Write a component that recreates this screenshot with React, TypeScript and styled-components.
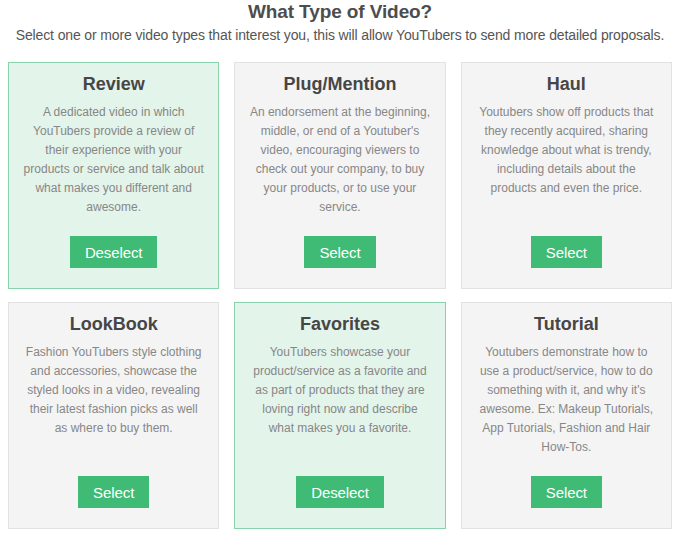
import {useState} from "react";
import styled, {createGlobalStyle} from "styled-components";

const GlobalStyle = createGlobalStyle`
body {
    margin: 0;
    background: #ffffff;
    font-family: "Liberation Sans", Arial, sans-serif;
}
`

const Page = styled.div`
padding: 0 8px;
`

const Header = styled.div`
text-align: center;
margin-bottom: 18px;
`

const Heading = styled.h1`
margin: 0;
font-size: 19px;
line-height: 24px;
font-weight: 700;
color: #4d4d4d;
letter-spacing: -0.1px;
`

const Subtitle = styled.p`
margin: 2px 0 0;
font-size: 14px;
line-height: 18px;
color: #555555;
letter-spacing: -0.13px;
`

const Grid = styled.div`
display: grid;
grid-template-columns: repeat(3, 1fr);
column-gap: 15px;
row-gap: 13px;
`

const Card = styled.div<{ $selected: boolean }>`
display: flex;
flex-direction: column;
align-items: center;
padding: 10px 0 20px;
border: 1px solid ${p => p.$selected ? '#8ad2ac' : '#e2e2e2'};
background-color: ${p => p.$selected ? '#e3f4ea' : '#f4f4f4'};
text-align: center;
`

const Title = styled.h2`
margin: 0;
font-size: 18px;
line-height: 22px;
font-weight: 700;
color: #464646;
`

const Description = styled.p`
margin: 8px 0 19px;
padding: 0 13px;
font-size: 12px;
line-height: 19px;
color: #878787;
`

const Button = styled.button`
margin-top: auto;
height: 32px;
padding: 0 15px;
border: none;
background-color: #3fbb76;
color: #ffffff;
font-family: "Liberation Sans", Arial, sans-serif;
font-size: 15px;
letter-spacing: -0.1px;
cursor: pointer;
&:hover{
background-color: #37a968;
}
`

const types = [
    {
        title: 'Review',
        text: 'A dedicated video in which YouTubers provide a review of their experience with your products or service and talk about what makes you different and awesome.',
    },
    {
        title: 'Plug/Mention',
        text: "An endorsement at the beginning, middle, or end of a Youtuber's video, encouraging viewers to check out your company, to buy your products, or to use your service.",
    },
    {
        title: 'Haul',
        text: 'Youtubers show off products that they recently acquired, sharing knowledge about what is trendy, including details about the products and even the price.',
    },
    {
        title: 'LookBook',
        text: 'Fashion YouTubers style clothing and accessories, showcase the styled looks in a video, revealing their latest fashion picks as well as where to buy them.',
    },
    {
        title: 'Favorites',
        text: 'YouTubers showcase your product/service as a favorite and as part of products that they are loving right now and describe what makes you a favorite.',
    },
    {
        title: 'Tutorial',
        text: "Youtubers demonstrate how to use a product/service, how to do something with it, and why it's awesome. Ex: Makeup Tutorials, App Tutorials, Fashion and Hair How-Tos.",
    },
]

const App = () => {

    const [selected, setSelected] = useState<string[]>(['Review', 'Favorites'])

    function toggle(title: string){
        if(selected.includes(title)){
            setSelected(selected.filter(t => t !== title))
        }
        else {
            setSelected([...selected, title])
        }
    }

    return(
        <Page>
            <GlobalStyle />
            <Header>
                <Heading>What Type of Video?</Heading>
                <Subtitle>
                    Select one or more video types that interest you, this will allow YouTubers to send more detailed proposals.
                </Subtitle>
            </Header>
            <Grid>
                {types.map(type => {
                    const isSelected = selected.includes(type.title)
                    return (
                        <Card key={type.title} $selected={isSelected}>
                            <Title>{type.title}</Title>
                            <Description>{type.text}</Description>
                            <Button type='button' onClick={() => toggle(type.title)}>
                                {isSelected ? 'Deselect' : 'Select'}
                            </Button>
                        </Card>
                    )
                })}
            </Grid>
        </Page>
    )
}

export default App;
